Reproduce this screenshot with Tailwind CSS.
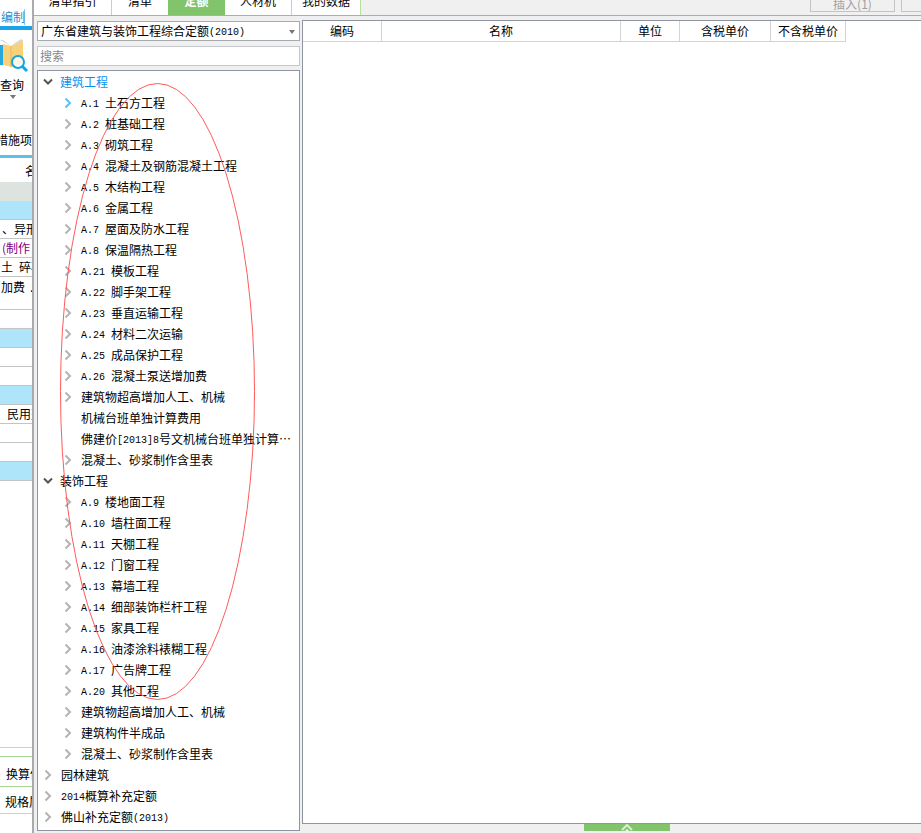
<!DOCTYPE html>
<html lang="zh">
<head>
<meta charset="UTF-8">
<title>定额</title>
<script src="https://cdn.jsdelivr.net/npm/@tailwindcss/browser@4"></script>
</head>
<body class="bg-[#f0f0f0] text-black text-[12px] font-['Noto_Sans_CJK_SC',sans-serif]">
<svg class="hidden">
  <symbol id="closed" viewBox="0 0 8 12"><path d="M1.5 1.5 6 6l-4.500 4.500" fill="none" stroke="currentColor" stroke-width="2"/></symbol>
  <symbol id="open" viewBox="0 0 10 8"><path d="M1 1.500 5 5.500l4-4" fill="none" stroke="currentColor" stroke-width="2"/></symbol>
</svg>

<div class="relative flex w-[921px] h-[833px] overflow-hidden">

  <!-- left strip, cut off by the panel -->
  <aside class="w-[32px] shrink-0 h-full bg-white overflow-hidden flex flex-col whitespace-nowrap">
    <div class="h-[26px] shrink-0 pt-[9px] pl-[1px] leading-[16px] text-[#1c8fd6]"><span class="inline-block w-[24px] border-r border-[#8cc8ec]">编制</span></div>
    <div class="h-[4px] shrink-0 bg-[#1aa3e8]"></div>
    <div class="h-[89px] shrink-0 border-b border-[#d0d0d0] relative">
      <svg class="absolute left-0 top-[9px]" width="32" height="34" viewBox="0 0 32 34">
        <path d="M0 6h3v20H0z" fill="#2aa8dc"/>
        <path d="M3 5l8 2 12-6v23l-11 4-9-2z" fill="#f8d27a"/>
        <path d="M0 1h3l8 6 10-7 2 2-12 5z" fill="#cfd8dc"/>
        <path d="M11 7v21" stroke="#e9b959"/>
        <circle cx="18" cy="23" r="6" fill="#ffffffcc" stroke="#12a6e4" stroke-width="2"/>
        <path d="M22 27l5 5" stroke="#12a6e4" stroke-width="3"/>
      </svg>
      <div class="absolute left-0 top-[47px] leading-[16px]">查询</div>
      <div class="absolute left-[10px] top-[65px] border-x-[3px] border-x-transparent border-t-[4px] border-t-[#777]"></div>
    </div>
    <div class="h-[36px] shrink-0 pt-[6px] leading-[30px] overflow-hidden"><span class="block -ml-[4px] w-[48px]">措施项目</span></div>
    <div class="h-[3px] shrink-0 bg-[#5cc0ee]"></div>
    <div class="h-[24px] shrink-0 pl-[25px] pt-[5px] leading-[16px]">名称</div>
    <div class="h-[19px] shrink-0 bg-[#dde3df]"></div>
    <div class="h-[19px] shrink-0 bg-[#aee5fb] border-b border-[#c4c4c4]"></div>
    <div class="h-[19px] shrink-0 border-b border-[#c4c4c4] leading-[18px] pl-[2px]">、异形</div>
    <div class="h-[19px] shrink-0 border-b border-[#c4c4c4] leading-[18px] pl-[2px] text-[#800080]">(制作</div>
    <div class="h-[19px] shrink-0 border-b border-[#c4c4c4] leading-[18px] pl-[1px]">土<span class="ml-[6px]">碎石</span></div>
    <div class="h-[33px] shrink-0 border-b border-[#c4c4c4] leading-[20px] pl-[1px]">加费<span class="ml-[5px]">.</span></div>
    <div class="h-[19px] shrink-0 border-b border-[#c4c4c4]"></div>
    <div class="h-[19px] shrink-0 bg-[#aee5fb] border-b border-[#c4c4c4]"></div>
    <div class="h-[19px] shrink-0 border-b border-[#c4c4c4]"></div>
    <div class="h-[19px] shrink-0 border-b border-[#c4c4c4]"></div>
    <div class="h-[19px] shrink-0 bg-[#aee5fb] border-b border-[#c4c4c4]"></div>
    <div class="h-[19px] shrink-0 border-b border-[#c4c4c4] leading-[18px] pl-[7px]">民用建</div>
    <div class="h-[19px] shrink-0 border-b border-[#c4c4c4]"></div>
    <div class="h-[19px] shrink-0 border-b border-[#c4c4c4]"></div>
    <div class="h-[19px] shrink-0 bg-[#aee5fb] border-b border-[#c4c4c4]"></div>
    <div class="h-[267px] shrink-0 border-b border-[#d0d0d0]"></div>
    <div class="h-[9px] shrink-0 border-b border-[#a8d898]"></div>
    <div class="h-[30px] shrink-0 border-b border-[#a8d898] flex items-center pl-[6px] pt-[5px]">换算信息</div>
    <div class="h-[27px] shrink-0 border-b border-[#d0d0d0] flex items-center pl-[5px] pt-[3px]">规格属性</div>
  </aside>
  <div class="w-[2px] shrink-0 h-full bg-[#a9abb0]"></div>

  <!-- main area -->
  <div class="flex-1 min-w-0 flex flex-col">

    <!-- tabs -->
    <div class="relative h-[16px] shrink-0 flex border-b border-[#8cc878] bg-[#f0f0f0] overflow-hidden">
      <div class="w-[78px] flex justify-center bg-white border-r border-[#b4e0a0] leading-[16px]"><span class="-mt-[7px]">清单指引</span></div>
      <div class="w-[56px] flex justify-center bg-white leading-[16px]"><span class="-mt-[7px]">清单</span></div>
      <div class="w-[57px] flex justify-center bg-[#82c46c] text-white font-bold leading-[16px]"><span class="-mt-[7px]">定额</span></div>
      <div class="w-[67px] flex justify-center bg-white border-r border-[#b4e0a0] leading-[16px]"><span class="-mt-[7px]">人材机</span></div>
      <div class="w-[69px] flex justify-center bg-white border-r border-[#b4e0a0] leading-[16px]"><span class="-mt-[7px]">我的数据</span></div>
      <div class="absolute left-[776px] top-[-6px] w-[85px] h-[18px] border border-[#c4c4c4] text-[#a0a0a0] flex justify-center leading-[18px]">插入(1)</div>
      <div class="absolute left-[867px] top-[-6px] w-[40px] h-[18px] border border-[#c4c4c4]"></div>
    </div>

    <div class="flex-1 flex">
      <!-- tree column -->
      <div class="w-[266px] shrink-0 pl-[3px] pt-[5px] flex flex-col">
        <div class="relative h-[20px] shrink-0 bg-white border border-[#a6abb0] flex items-center pl-[3px] leading-[18px] whitespace-nowrap">广东省建筑与装饰工程综合定额<span class="font-['Liberation_Mono',monospace] text-[10px] pt-[3px]">(2010)</span>
          <div class="absolute right-[4px] top-[8px] border-x-[3px] border-x-transparent border-t-[4px] border-t-[#777]"></div>
        </div>
        <div class="mt-[5px] h-[20px] shrink-0 bg-white border border-[#c4c8cc] flex items-center pl-[2px] leading-[18px] text-[#888]">搜索</div>
        <div class="mt-[4px] h-[761px] shrink-0 bg-white border border-[#8e95a0] overflow-hidden whitespace-nowrap leading-[21px]">
          <div class="h-[21px] flex items-center pl-[5px]"><svg class="w-[10px] h-[8px] text-[#555] mr-[7px]"><use href="#open"/></svg><span class="text-[#0a90f0]">建筑工程</span></div>
          <div class="h-[21px] flex items-center pl-[26px]"><svg class="w-[8px] h-[12px] text-[#55c4f4] mr-[9px]"><use href="#closed"/></svg><span class="font-['Liberation_Mono',monospace] text-[10px] w-[24px] pt-[3px]">A.1</span>土石方工程</div>
          <div class="h-[21px] flex items-center pl-[26px]"><svg class="w-[8px] h-[12px] text-[#b4b4b4] mr-[9px]"><use href="#closed"/></svg><span class="font-['Liberation_Mono',monospace] text-[10px] w-[24px] pt-[3px]">A.2</span>桩基础工程</div>
          <div class="h-[21px] flex items-center pl-[26px]"><svg class="w-[8px] h-[12px] text-[#b4b4b4] mr-[9px]"><use href="#closed"/></svg><span class="font-['Liberation_Mono',monospace] text-[10px] w-[24px] pt-[3px]">A.3</span>砌筑工程</div>
          <div class="h-[21px] flex items-center pl-[26px]"><svg class="w-[8px] h-[12px] text-[#b4b4b4] mr-[9px]"><use href="#closed"/></svg><span class="font-['Liberation_Mono',monospace] text-[10px] w-[24px] pt-[3px]">A.4</span>混凝土及钢筋混凝土工程</div>
          <div class="h-[21px] flex items-center pl-[26px]"><svg class="w-[8px] h-[12px] text-[#b4b4b4] mr-[9px]"><use href="#closed"/></svg><span class="font-['Liberation_Mono',monospace] text-[10px] w-[24px] pt-[3px]">A.5</span>木结构工程</div>
          <div class="h-[21px] flex items-center pl-[26px]"><svg class="w-[8px] h-[12px] text-[#b4b4b4] mr-[9px]"><use href="#closed"/></svg><span class="font-['Liberation_Mono',monospace] text-[10px] w-[24px] pt-[3px]">A.6</span>金属工程</div>
          <div class="h-[21px] flex items-center pl-[26px]"><svg class="w-[8px] h-[12px] text-[#b4b4b4] mr-[9px]"><use href="#closed"/></svg><span class="font-['Liberation_Mono',monospace] text-[10px] w-[24px] pt-[3px]">A.7</span>屋面及防水工程</div>
          <div class="h-[21px] flex items-center pl-[26px]"><svg class="w-[8px] h-[12px] text-[#b4b4b4] mr-[9px]"><use href="#closed"/></svg><span class="font-['Liberation_Mono',monospace] text-[10px] w-[24px] pt-[3px]">A.8</span>保温隔热工程</div>
          <div class="h-[21px] flex items-center pl-[26px]"><svg class="w-[8px] h-[12px] text-[#b4b4b4] mr-[9px]"><use href="#closed"/></svg><span class="font-['Liberation_Mono',monospace] text-[10px] w-[30px] pt-[3px]">A.21</span>模板工程</div>
          <div class="h-[21px] flex items-center pl-[26px]"><svg class="w-[8px] h-[12px] text-[#b4b4b4] mr-[9px]"><use href="#closed"/></svg><span class="font-['Liberation_Mono',monospace] text-[10px] w-[30px] pt-[3px]">A.22</span>脚手架工程</div>
          <div class="h-[21px] flex items-center pl-[26px]"><svg class="w-[8px] h-[12px] text-[#b4b4b4] mr-[9px]"><use href="#closed"/></svg><span class="font-['Liberation_Mono',monospace] text-[10px] w-[30px] pt-[3px]">A.23</span>垂直运输工程</div>
          <div class="h-[21px] flex items-center pl-[26px]"><svg class="w-[8px] h-[12px] text-[#b4b4b4] mr-[9px]"><use href="#closed"/></svg><span class="font-['Liberation_Mono',monospace] text-[10px] w-[30px] pt-[3px]">A.24</span>材料二次运输</div>
          <div class="h-[21px] flex items-center pl-[26px]"><svg class="w-[8px] h-[12px] text-[#b4b4b4] mr-[9px]"><use href="#closed"/></svg><span class="font-['Liberation_Mono',monospace] text-[10px] w-[30px] pt-[3px]">A.25</span>成品保护工程</div>
          <div class="h-[21px] flex items-center pl-[26px]"><svg class="w-[8px] h-[12px] text-[#b4b4b4] mr-[9px]"><use href="#closed"/></svg><span class="font-['Liberation_Mono',monospace] text-[10px] w-[30px] pt-[3px]">A.26</span>混凝土泵送增加费</div>
          <div class="h-[21px] flex items-center pl-[26px]"><svg class="w-[8px] h-[12px] text-[#b4b4b4] mr-[9px]"><use href="#closed"/></svg>建筑物超高增加人工、机械</div>
          <div class="h-[21px] flex items-center pl-[43px]">机械台班单独计算费用</div>
          <div class="h-[21px] flex items-center pl-[43px]">佛建价<span class="font-['Liberation_Mono',monospace] text-[10px] pt-[3px]">[2013]8</span>号文机械台班单独计算…</div>
          <div class="h-[21px] flex items-center pl-[26px]"><svg class="w-[8px] h-[12px] text-[#b4b4b4] mr-[9px]"><use href="#closed"/></svg>混凝土、砂浆制作含里表</div>
          <div class="h-[21px] flex items-center pl-[5px]"><svg class="w-[10px] h-[8px] text-[#555] mr-[7px]"><use href="#open"/></svg>装饰工程</div>
          <div class="h-[21px] flex items-center pl-[26px]"><svg class="w-[8px] h-[12px] text-[#b4b4b4] mr-[9px]"><use href="#closed"/></svg><span class="font-['Liberation_Mono',monospace] text-[10px] w-[24px] pt-[3px]">A.9</span>楼地面工程</div>
          <div class="h-[21px] flex items-center pl-[26px]"><svg class="w-[8px] h-[12px] text-[#b4b4b4] mr-[9px]"><use href="#closed"/></svg><span class="font-['Liberation_Mono',monospace] text-[10px] w-[30px] pt-[3px]">A.10</span>墙柱面工程</div>
          <div class="h-[21px] flex items-center pl-[26px]"><svg class="w-[8px] h-[12px] text-[#b4b4b4] mr-[9px]"><use href="#closed"/></svg><span class="font-['Liberation_Mono',monospace] text-[10px] w-[30px] pt-[3px]">A.11</span>天棚工程</div>
          <div class="h-[21px] flex items-center pl-[26px]"><svg class="w-[8px] h-[12px] text-[#b4b4b4] mr-[9px]"><use href="#closed"/></svg><span class="font-['Liberation_Mono',monospace] text-[10px] w-[30px] pt-[3px]">A.12</span>门窗工程</div>
          <div class="h-[21px] flex items-center pl-[26px]"><svg class="w-[8px] h-[12px] text-[#b4b4b4] mr-[9px]"><use href="#closed"/></svg><span class="font-['Liberation_Mono',monospace] text-[10px] w-[30px] pt-[3px]">A.13</span>幕墙工程</div>
          <div class="h-[21px] flex items-center pl-[26px]"><svg class="w-[8px] h-[12px] text-[#b4b4b4] mr-[9px]"><use href="#closed"/></svg><span class="font-['Liberation_Mono',monospace] text-[10px] w-[30px] pt-[3px]">A.14</span>细部装饰栏杆工程</div>
          <div class="h-[21px] flex items-center pl-[26px]"><svg class="w-[8px] h-[12px] text-[#b4b4b4] mr-[9px]"><use href="#closed"/></svg><span class="font-['Liberation_Mono',monospace] text-[10px] w-[30px] pt-[3px]">A.15</span>家具工程</div>
          <div class="h-[21px] flex items-center pl-[26px]"><svg class="w-[8px] h-[12px] text-[#b4b4b4] mr-[9px]"><use href="#closed"/></svg><span class="font-['Liberation_Mono',monospace] text-[10px] w-[30px] pt-[3px]">A.16</span>油漆涂料裱糊工程</div>
          <div class="h-[21px] flex items-center pl-[26px]"><svg class="w-[8px] h-[12px] text-[#b4b4b4] mr-[9px]"><use href="#closed"/></svg><span class="font-['Liberation_Mono',monospace] text-[10px] w-[30px] pt-[3px]">A.17</span>广告牌工程</div>
          <div class="h-[21px] flex items-center pl-[26px]"><svg class="w-[8px] h-[12px] text-[#b4b4b4] mr-[9px]"><use href="#closed"/></svg><span class="font-['Liberation_Mono',monospace] text-[10px] w-[30px] pt-[3px]">A.20</span>其他工程</div>
          <div class="h-[21px] flex items-center pl-[26px]"><svg class="w-[8px] h-[12px] text-[#b4b4b4] mr-[9px]"><use href="#closed"/></svg>建筑物超高增加人工、机械</div>
          <div class="h-[21px] flex items-center pl-[26px]"><svg class="w-[8px] h-[12px] text-[#b4b4b4] mr-[9px]"><use href="#closed"/></svg>建筑构件半成品</div>
          <div class="h-[21px] flex items-center pl-[26px]"><svg class="w-[8px] h-[12px] text-[#b4b4b4] mr-[9px]"><use href="#closed"/></svg>混凝土、砂浆制作含里表</div>
          <div class="h-[21px] flex items-center pl-[6px]"><svg class="w-[8px] h-[12px] text-[#b4b4b4] mr-[9px]"><use href="#closed"/></svg>园林建筑</div>
          <div class="h-[21px] flex items-center pl-[6px]"><svg class="w-[8px] h-[12px] text-[#b4b4b4] mr-[9px]"><use href="#closed"/></svg><span class="font-['Liberation_Mono',monospace] text-[10px] pt-[3px]">2014</span>概算补充定额</div>
          <div class="h-[21px] flex items-center pl-[6px]"><svg class="w-[8px] h-[12px] text-[#b4b4b4] mr-[9px]"><use href="#closed"/></svg>佛山补充定额<span class="font-['Liberation_Mono',monospace] text-[10px] pt-[3px]">(2013)</span></div>
        </div>
      </div>

      <!-- price table -->
      <div class="flex-1 min-w-0 pl-[2px] pt-[4px] flex flex-col">
        <div class="h-[804px] shrink-0 bg-white border-t border-l border-b border-[#8e95a0]">
          <div class="flex w-[543px] h-[21px] leading-[19px] text-center">
            <div class="w-[79px] border-r border-b border-[#d4d4d4]">编码</div>
            <div class="w-[239px] border-r border-b border-[#d4d4d4]">名称</div>
            <div class="w-[59px] border-r border-b border-[#d4d4d4]">单位</div>
            <div class="w-[91px] border-r border-b border-[#d4d4d4]">含税单价</div>
            <div class="w-[75px] border-r border-b border-[#d4d4d4]">不含税单价</div>
          </div>
        </div>
        <div class="ml-[282px] w-[86px] h-[7px] bg-[#82c46c] flex justify-center overflow-hidden">
          <svg width="12" height="7" viewBox="0 0 12 7"><path d="M1 6l5-5 5 5" fill="none" stroke="#d8f0d0" stroke-width="2"/><path d="M4 7l2-2 2 2z" fill="#fff"/></svg>
        </div>
      </div>
    </div>
  </div>

  <!-- red hand-drawn ellipse over the tree -->
  <svg class="absolute left-0 top-0 pointer-events-none" width="921" height="833" viewBox="0 0 921 833">
    <ellipse cx="157.500" cy="391.500" rx="97" ry="308" fill="none" stroke="#ff5a5a" stroke-width="1"/>
  </svg>
</div>
</body>
</html>
